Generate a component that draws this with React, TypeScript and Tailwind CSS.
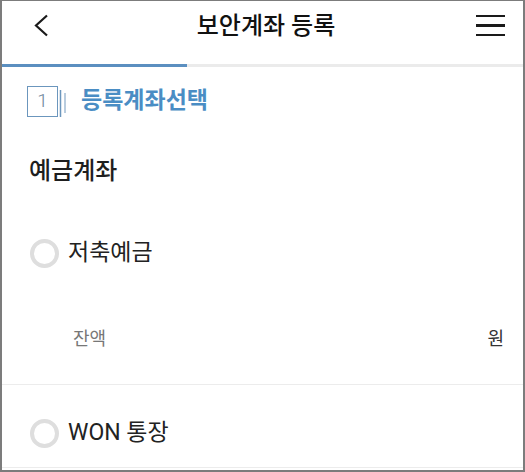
import React from 'react';

const font = { fontFamily: 'Roboto, "Noto Sans CJK KR", sans-serif' };

const Radio: React.FC<{ label: string }> = ({ label }) => (
    <div className="flex h-[40px] items-center gap-[9px] pl-[28px]">
        <span className="h-[29px] w-[29px] rounded-full border-[4px] border-[#dedede]" />
        <span className="text-[23px] text-[#222]">{label}</span>
    </div>
);

export default function App() {
    return (
        <div
            style={font}
            className="flex h-[472px] w-[525px] flex-col overflow-hidden border-x-2 border-t border-b-2 border-[#7c7c7c] bg-white"
        >
            {/* header */}
            <div className="grid h-[63px] grid-cols-[1fr_auto_1fr] items-center pb-[14px]">
                <div className="pl-[31px]">
                    <svg width="16" height="23" viewBox="0 0 16 23" fill="none">
                        <polyline points="14,1.5 3,11.5 14,21.5" stroke="#1a1a1a" strokeWidth="2.2" />
                    </svg>
                </div>
                <div className="pl-[7px] text-[24px] font-medium text-[#111]">보안계좌 등록</div>
                <div className="flex justify-end pr-[18px]">
                    <div className="flex w-[29px] flex-col gap-[7px]">
                        <span className="h-[2.5px] bg-[#1a1a1a]" />
                        <span className="h-[2.5px] bg-[#1a1a1a]" />
                        <span className="h-[2.5px] bg-[#1a1a1a]" />
                    </div>
                </div>
            </div>

            {/* progress */}
            <div className="h-[3px] bg-[#ebebeb]">
                <div className="h-full w-[185px] bg-[#5b8fc0]" />
            </div>

            {/* step */}
            <div className="mt-[19px] flex h-[31px] items-center gap-[13px] pl-[25px]">
                <div className="flex items-center">
                    <div className="flex h-[31px] w-[31px] items-center justify-center border-[1.5px] border-[#6b96bd] text-[19px] font-light text-[#6d849b]">
                        1
                    </div>
                    <svg width="10" height="31" viewBox="0 0 10 31">
                        <line x1="2.5" y1="4" x2="2.5" y2="31" stroke="#6b96bd" strokeWidth="1.5" />
                        <line x1="7" y1="7" x2="7" y2="27" stroke="#8aaac8" strokeWidth="1.2" />
                    </svg>
                </div>
                <div className="text-[23px] font-bold text-[#4a8dc4]">등록계좌선택</div>
            </div>

            {/* section title */}
            <div className="mt-[34px] flex h-[40px] items-center pl-[27px] text-[24px] font-medium text-[#1e1e1e]">
                예금계좌
            </div>

            <div className="mt-[42px]">
                <Radio label="저축예금" />
            </div>

            <div className="mt-[50px] flex h-[30px] items-center justify-between pl-[71px] pr-[19px]">
                <span className="text-[18px] text-[#777]">잔액</span>
                <span className="text-[18px] text-[#333]">원</span>
            </div>

            <div className="mt-[31px] h-px bg-[#ececec]" />

            <div className="mt-[28px]">
                <Radio label="WON 통장" />
            </div>

            <div className="mt-[14px] h-px bg-[#ececec]" />
        </div>
    );
}
